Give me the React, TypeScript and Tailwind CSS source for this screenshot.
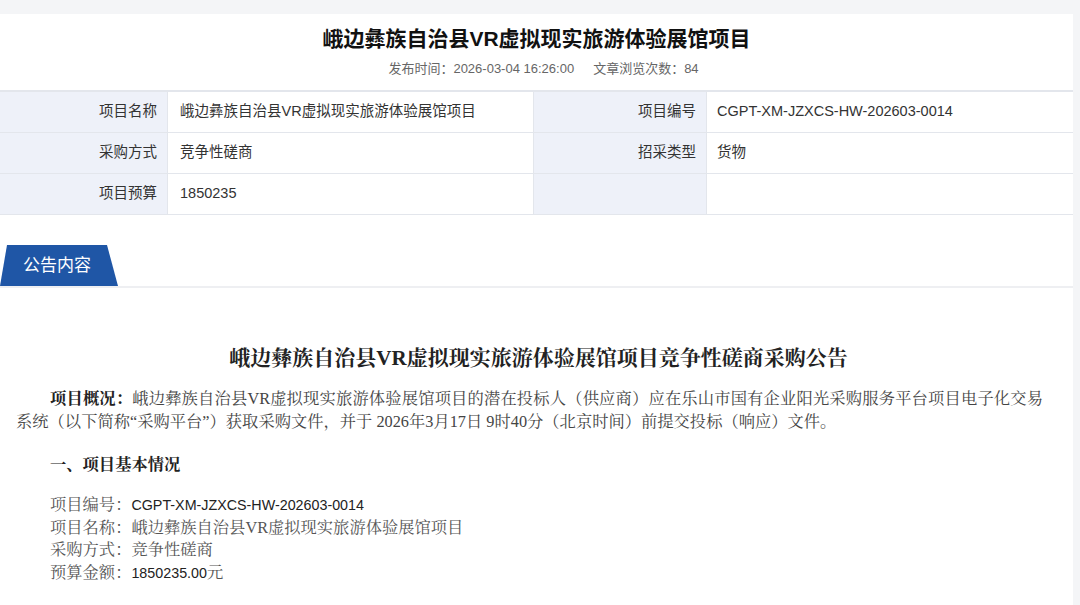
import React from "react";

const sans = "font-['Segoe_UI','Liberation_Sans','Noto_Sans_CJK_SC',sans-serif]";
const serif = "font-['Liberation_Serif','Noto_Serif_CJK_SC','Noto_Sans_CJK_SC',serif]";

function Row({ l1, v1, l2, v2 }: { l1: string; v1: string; l2: string; v2: string }) {
  return (
    <div className="grid grid-cols-[168px_366px_173px_1fr] border-b border-[#e3e6ec] h-[41px] text-[14.5px] text-[#333]">
      <div className="bg-[#eef1f9] border-r border-[#e3e6ec] flex items-center justify-end pr-[10px]">{l1}</div>
      <div className="border-r border-[#e3e6ec] flex items-center pl-[12px]">{v1}</div>
      <div className="bg-[#eef1f9] border-r border-[#e3e6ec] flex items-center justify-end pr-[10px]">{l2}</div>
      <div className="flex items-center pl-[10px]">{v2}</div>
    </div>
  );
}

export default function App() {
  return (
    <div className={`min-h-[605px] bg-[#f4f5f7] pt-[14px] pr-[7px] ${sans}`}>
      <div className="bg-white w-[1073px] min-h-[591px]">
        <div className="pt-[10px] text-center">
          <h1 className="text-[21px] leading-[30px] font-bold text-[#111]">峨边彝族自治县VR虚拟现实旅游体验展馆项目</h1>
          <div className="mt-[5px] text-[13px] leading-[20px] text-[#666] flex justify-center gap-[19px] pl-[14px]">
            <span>发布时间：2026-03-04 16:26:00</span>
            <span>文章浏览次数：84</span>
          </div>
        </div>
        <div className="mt-[11px] border-t-2 border-[#e3e6ec]">
          <Row l1="项目名称" v1="峨边彝族自治县VR虚拟现实旅游体验展馆项目" l2="项目编号" v2="CGPT-XM-JZXCS-HW-202603-0014" />
          <Row l1="采购方式" v1="竞争性磋商" l2="招采类型" v2="货物" />
          <Row l1="项目预算" v1="1850235" l2="" v2="" />
        </div>
        <div className="mt-[30px] border-b-2 border-[#eeeff2] h-[43px] flex items-end">
          <div className="w-[118px] h-[41px] bg-[#1f56a6] rounded-t-[3px] [clip-path:polygon(7px_0,107px_0,118px_41px,0_41px)] flex items-center justify-center text-white text-[17px] pl-[2px] pr-[6px]">
            公告内容
          </div>
        </div>
        <div className={`${serif} pl-[16px] pr-[30px]`}>
          <h2 className="mt-[54px] text-center text-[21px] leading-[32px] font-bold text-[#222] pl-[18px]">
            峨边彝族自治县VR虚拟现实旅游体验展馆项目竞争性磋商采购公告
          </h2>
          <p className="mt-[13px] text-[16.3px] leading-[23px] text-[#444] indent-[34px] text-justify">
            <b className="text-[#222]">项目概况：</b>峨边彝族自治县VR虚拟现实旅游体验展馆项目的潜在投标人（供应商）应在乐山市国有企业阳光采购服务平台项目电子化交易系统（以下简称“采购平台”）获取采购文件，并于 2026年3月17日 9时40分（北京时间）前提交投标（响应）文件。
          </p>
          <h3 className="mt-[20px] pl-[34px] text-[16.3px] leading-[23px] font-bold text-[#222]">一、项目基本情况</h3>
          <div className="mt-[18px] pl-[34px] text-[16.3px] leading-[22.7px] text-[#555]">
            <div>项目编号：<span className={`${sans} text-[14.3px] text-[#222]`}>CGPT-XM-JZXCS-HW-202603-0014</span></div>
            <div>项目名称：峨边彝族自治县VR虚拟现实旅游体验展馆项目</div>
            <div>采购方式：竞争性磋商</div>
            <div>预算金额：<span className={`${sans} text-[14.3px] text-[#222]`}>1850235.00</span>元</div>
          </div>
        </div>
      </div>
    </div>
  );
}
